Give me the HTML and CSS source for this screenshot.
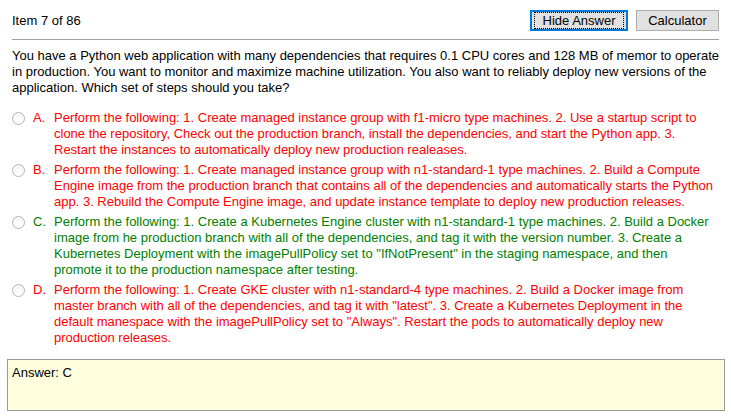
FILE: index.html
```html
<!DOCTYPE html>
<html>
<head>
<meta charset="utf-8">
<link rel="stylesheet" href="styles.css">
</head>
<body>
<div class="page">
  <div class="header">
    <span class="item-count">Item 7 of 86</span>
    <div class="buttons">
      <button class="btn btn-focus"><span class="focus-ring">Hide Answer</span></button>
      <button class="btn">Calculator</button>
    </div>
  </div>
  <div class="rule"></div>
  <p class="question">You have a Python web application with many dependencies that requires 0.1 CPU cores and 128 MB of memor to operate in production. You want to monitor and maximize machine utilization. You also want to reliably deploy new versions of the application. Which set of steps should you take?</p>
  <div class="options">
    <div class="option wrong">
      <span class="radio"></span>
      <span class="letter">A.</span>
      <span class="text">Perform the following: 1. Create managed instance group with f1-micro type machines. 2. Use a startup script to clone the repository, Check out the production branch, install the dependencies, and start the Python app. 3. Restart the instances to automatically deploy new production realeases.</span>
    </div>
    <div class="option wrong">
      <span class="radio"></span>
      <span class="letter">B.</span>
      <span class="text">Perform the following: 1. Create managed instance group with n1-standard-1 type machines. 2. Build a Compute Engine image from the production branch that contains all of the dependencies and automatically starts the Python app. 3. Rebuild the Compute Engine image, and update instance template to deploy new production releases.</span>
    </div>
    <div class="option right">
      <span class="radio"></span>
      <span class="letter">C.</span>
      <span class="text">Perform the following: 1. Create a Kubernetes Engine cluster with n1-standard-1 type machines. 2. Build a Docker image from he production branch with all of the dependencies, and tag it with the version number. 3. Create a Kubernetes Deployment with the imagePullPolicy set to "IfNotPresent" in the staging namespace, and then promote it to the production namespace after testing.</span>
    </div>
    <div class="option wrong">
      <span class="radio"></span>
      <span class="letter">D.</span>
      <span class="text">Perform the following: 1. Create GKE cluster with n1-standard-4 type machines. 2. Build a Docker image from master branch with all of the dependencies, and tag it with "latest". 3. Create a Kubernetes Deployment in the default manespace with the imagePullPolicy set to "Always". Restart the pods to automatically deploy new production releases.</span>
    </div>
  </div>
  <div class="answer">Answer: C</div>
</div>
</body>
</html>
```

FILE: styles.css
```css
html, body {
  margin: 0;
  padding: 0;
  background: #ffffff;
}

body {
  font-family: "Liberation Sans", Arial, sans-serif;
  font-size: 13px;
  line-height: 16px;
  color: #000000;
}

.page {
  display: flex;
  flex-direction: column;
}

.header {
  display: flex;
  justify-content: space-between;
  align-items: center;
  margin: 10px 12px 0 12px;
}

.buttons {
  display: flex;
  gap: 8px;
}

.btn {
  font-family: "Liberation Sans", Arial, sans-serif;
  font-size: 13px;
  line-height: 15px;
  height: 21px;
  padding: 0 10px;
  background: #e1e1e1;
  border: 1px solid #adadad;
  color: #000;
  border-radius: 0;
  margin: 0;
}

.btn-focus {
  width: 98px;
  border: 2px solid #0078d7;
  padding: 0 2px;
}

.focus-ring {
  display: block;
  border: 1px dotted #000;
  line-height: 15px;
}

.btn:not(.btn-focus) {
  width: 83px;
}

.rule {
  height: 1px;
  background: #a0a0a0;
  margin: 8px 12px 0 12px;
}

.question {
  margin: 8px 4px 0 12px;
}

.options {
  display: flex;
  flex-direction: column;
  gap: 4px;
  margin: 14px 13px 0 12px;
}

.option {
  display: flex;
  align-items: flex-start;
}

.wrong {
  color: #ff0000;
}

.right {
  color: #008000;
}

.radio {
  flex: none;
  width: 11px;
  height: 11px;
  margin-top: 2px;
  margin-right: 8px;
  border: 1px solid #b4b4b4;
  border-radius: 50%;
  background: linear-gradient(#f4f4f4, #ffffff);
}

.letter {
  flex: none;
  width: 21px;
}

.text {
  flex: 1;
}

.answer {
  margin: 13px 6px 0 7px;
  height: 45px;
  padding: 5px 4px 0 4px;
  border: 1px solid #999999;
  background: #ffffe0;
}
```
